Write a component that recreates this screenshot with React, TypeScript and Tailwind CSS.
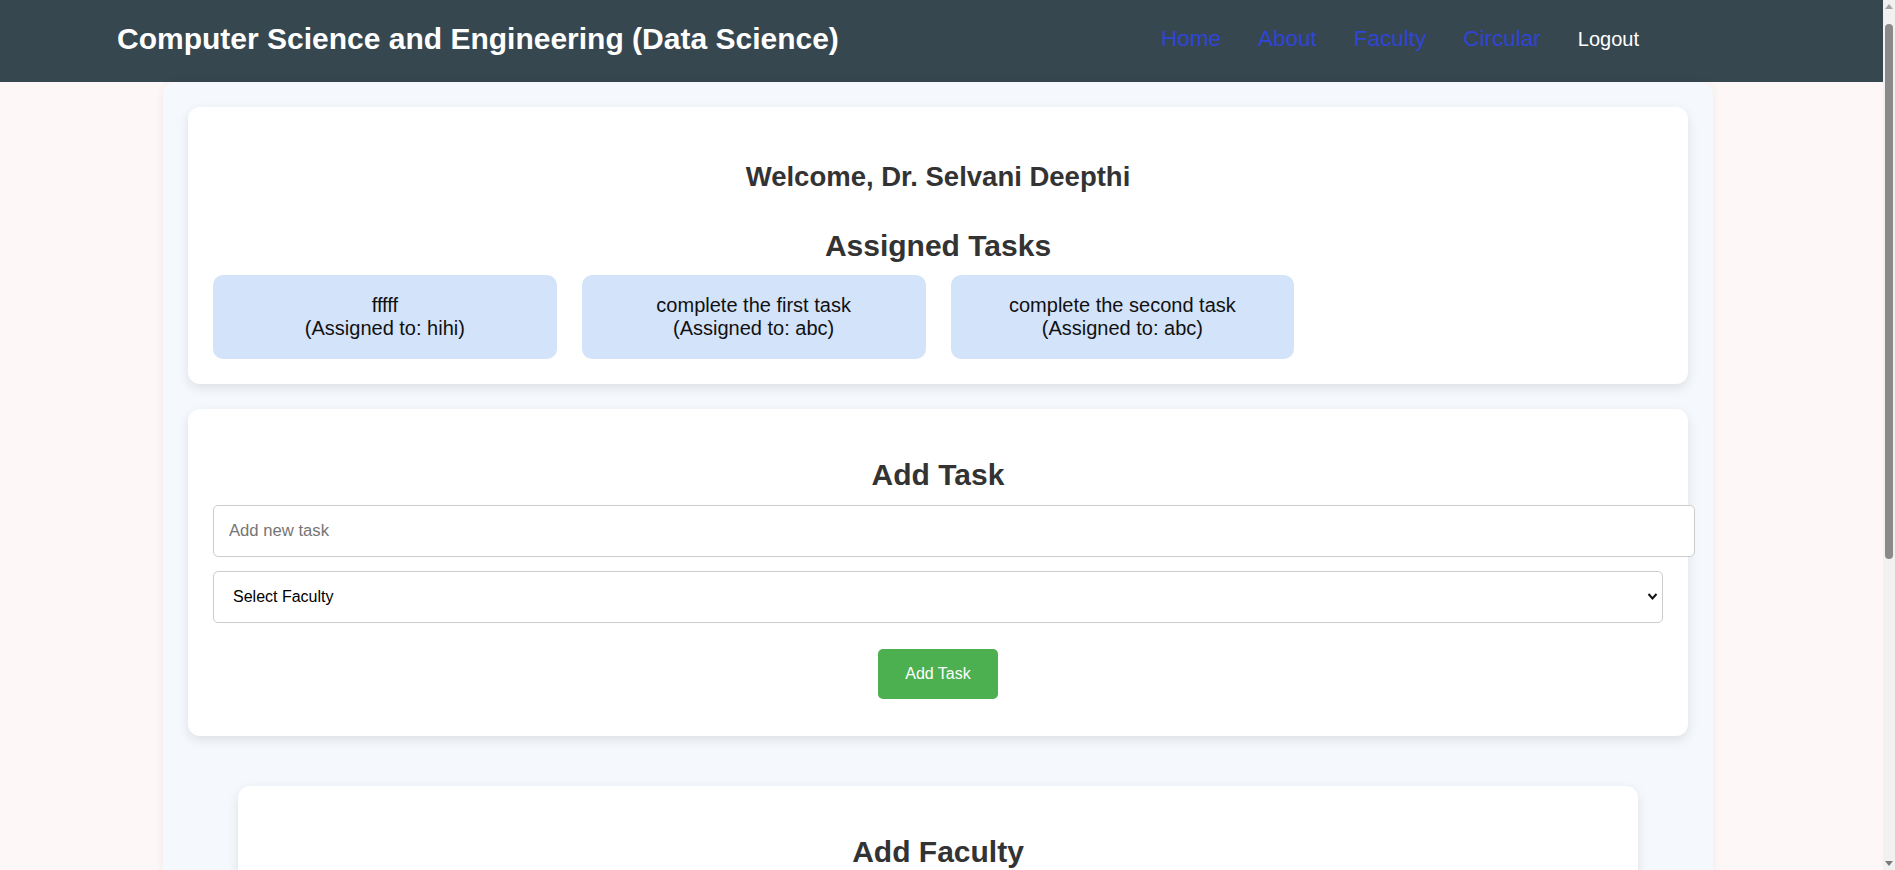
import React from "react";

const tasks = [
  { text: "fffff", who: "hihi" },
  { text: "complete the first task", who: "abc" },
  { text: "complete the second task", who: "abc" },
];

const links = ["Home", "About", "Faculty", "Circular"];

const Navbar: React.FC = () => (
  <nav className="h-[82px] bg-[#37474f] flex items-center justify-between pl-[117px] pr-[244px] pb-[4px]">
    <h1 className="text-[30px] font-bold text-white leading-[34px]">
      Computer Science and Engineering (Data Science)
    </h1>
    <div className="flex items-center gap-[37px]">
      {links.map((item) => (
        <a key={item} href="#" className="text-[22.5px] text-[#2f45d6] leading-[26px]">
          {item}
        </a>
      ))}
      <button className="text-[20px] text-white leading-[23px] cursor-pointer">Logout</button>
    </div>
  </nav>
);

const Card: React.FC<{ className?: string; children: React.ReactNode }> = ({
  className = "",
  children,
}) => (
  <div
    className={`bg-white rounded-[12px] p-[25px] shadow-[0_4px_12px_rgba(0,0,0,0.1)] ${className}`}
  >
    {children}
  </div>
);

const SelectBox: React.FC<{ label: string }> = ({ label }) => (
  <div className="relative">
    <select className="w-full h-[52px] appearance-none border border-[#cccccc] rounded-[5px] bg-white pl-[19px] text-[16px] text-black">
      <option>{label}</option>
    </select>
    <svg
      className="absolute right-[5px] top-[21px] pointer-events-none"
      width="11"
      height="9"
      viewBox="0 0 11 9"
    >
      <path d="M1.5 2 L5.5 6.5 L9.5 2" fill="none" stroke="#111" strokeWidth="2" />
    </svg>
  </div>
);

const TextInput: React.FC<{ placeholder: string; type?: string }> = ({
  placeholder,
  type = "text",
}) => (
  <input
    type={type}
    placeholder={placeholder}
    className="box-content block w-full h-[20px] py-[15px] px-[15px] border border-[#cccccc] rounded-[5px] bg-white text-[16.67px] placeholder:text-[#757575] outline-none"
  />
);

// the window in the shot has a classic scrollbar eating 12px on the right
const ScrollStrip: React.FC = () => (
  <div className="w-[12px] h-[870px] shrink-0 bg-[#f1f1f1] flex flex-col items-center">
    <div className="mt-[4px] w-0 h-0 border-l-[4px] border-r-[4px] border-b-[5px] border-l-transparent border-r-transparent border-b-[#a3a3a3]" />
    <div className="mt-[15px] w-[8px] h-[535px] rounded-[4px] bg-[#8a8a8a]" />
    <div className="mt-auto mb-[4px] w-0 h-0 border-l-[4px] border-r-[4px] border-t-[5px] border-l-transparent border-r-transparent border-t-[#7a7a7a]" />
  </div>
);

export default function App() {
  return (
    <div className="flex items-start bg-[#fdf8f7] font-['Liberation_Sans',Arial,sans-serif] text-[#333]">
      <div className="w-[1883px] shrink-0">
        <Navbar />
        <main className="w-[1550px] ml-[163px] bg-[#f5f9fe] rounded-[12px] p-[25px] pb-[60px] shadow-[0_0_10px_rgba(0,0,0,0.06)]">
          <Card>
            <h2 className="mt-[29px] text-center text-[27.5px] font-bold leading-[32px]">
              Welcome, Dr. Selvani Deepthi
            </h2>
            <h2 className="mt-[36px] text-center text-[30px] font-bold leading-[34px]">
              Assigned Tasks
            </h2>
            <div className="mt-[12px] flex flex-wrap gap-[25px]">
              {tasks.map((t) => (
                <div
                  key={t.text}
                  className="w-[calc((100%-75px)/4)] bg-[#d3e3fa] rounded-[10px] py-[19px] text-center text-[20px] leading-[23px] text-[#111]"
                >
                  {t.text}
                  <br />
                  (Assigned to: {t.who})
                </div>
              ))}
            </div>
          </Card>

          <Card className="mt-[25px]">
            <h2 className="mt-[24px] text-center text-[30px] font-bold leading-[34px]">Add Task</h2>
            <div className="mt-[13px]">
              <TextInput placeholder="Add new task" />
            </div>
            <div className="mt-[14px]">
              <SelectBox label="Select Faculty" />
            </div>
            <div className="mt-[26px] mb-[12px] flex justify-center">
              <button className="w-[120px] h-[50px] bg-[#4caf50] text-white text-[16px] rounded-[5px] cursor-pointer">
                Add Task
              </button>
            </div>
          </Card>

          <Card className="mt-[50px] w-[1400px] mx-auto">
            <h2 className="mt-[24px] text-center text-[30px] font-bold leading-[34px]">
              Add Faculty
            </h2>
            <div className="mt-[13px] flex flex-col gap-[14px]">
              <TextInput placeholder="Faculty Name" />
              <TextInput placeholder="Faculty Email" type="email" />
              <TextInput placeholder="Password" type="password" />
            </div>
            <div className="mt-[26px] mb-[12px] flex justify-center">
              <button className="w-[140px] h-[50px] bg-[#4caf50] text-white text-[16px] rounded-[5px] cursor-pointer">
                Add Faculty
              </button>
            </div>
          </Card>
        </main>
      </div>
      <ScrollStrip />
    </div>
  );
}
